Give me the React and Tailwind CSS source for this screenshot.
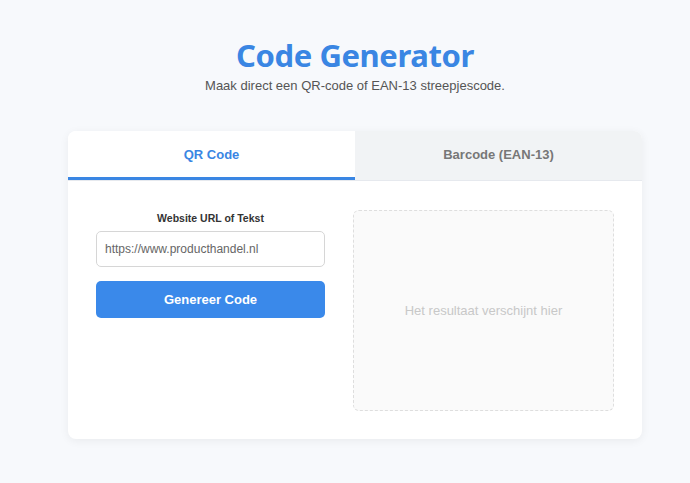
import React, { useState } from "react";

const App = () => {
  const [tab, setTab] = useState("qr");

  return (
    <div className="min-h-[483px] bg-[#f7f9fc] pl-5 font-['Liberation_Sans',Arial,sans-serif]">
      <div className="flex flex-col items-center">
        {/* Header */}
        <h1 className="mt-[33px] font-['Noto_Sans',sans-serif] text-[31px] font-bold leading-[44px] tracking-[-0.4px] text-[#3a86e3]">
          Code Generator
        </h1>
        <p className="mt-[1px] text-[13px] leading-[16px] text-[#555]">
          Maak direct een QR-code of EAN-13 streepjescode.
        </p>

        {/* Card */}
        <div className="mt-[37px] w-[574px] overflow-hidden rounded-lg bg-white shadow-[0_2px_10px_rgba(0,0,0,0.06)]">
          <div className="flex border-b border-[#e6e9ee]">
            <button
              onClick={() => setTab("qr")}
              className={
                tab === "qr"
                  ? "h-[49px] flex-1 border-b-[3px] border-[#3a86e3] bg-white pt-[2px] text-[13px] font-bold text-[#3a86e3]"
                  : "h-[49px] flex-1 border-b-[3px] border-transparent bg-[#f1f3f5] pt-[2px] text-[13px] font-bold text-[#777]"
              }
            >
              QR Code
            </button>
            <button
              onClick={() => setTab("ean")}
              className={
                tab === "ean"
                  ? "h-[49px] flex-1 border-b-[3px] border-[#3a86e3] bg-white pt-[2px] text-[13px] font-bold text-[#3a86e3]"
                  : "h-[49px] flex-1 border-b-[3px] border-transparent bg-[#f1f3f5] pt-[2px] text-[13px] font-bold text-[#777]"
              }
            >
              Barcode (EAN-13)
            </button>
          </div>

          <div className="flex gap-[28px] px-[28px] pt-[29px] pb-[28px]">
            {/* Form */}
            <div className="w-[229px] pt-[2px]">
              <label className="block text-center text-[10.5px] font-bold leading-[12px] text-[#333]">
                Website URL of Tekst
              </label>
              <input
                className="mt-[7px] h-[36px] w-full rounded-[5px] border border-[#d6d6d6] px-[8px] text-[12px] text-[#666] outline-none"
                defaultValue={tab === "qr" ? "https://www.producthandel.nl" : ""}
              />
              <button className="mt-[14px] h-[37px] w-full rounded-[5px] bg-[#3a89ea] text-[13px] font-bold text-white">
                Genereer Code
              </button>
            </div>

            {/* Result */}
            <div className="flex h-[201px] w-[261px] items-center justify-center rounded-[6px] border border-dashed border-[#dedede] bg-[#fafafa]">
              <span className="text-[13px] text-[#c8c8c8]">Het resultaat verschijnt hier</span>
            </div>
          </div>
        </div>
      </div>
    </div>
  );
};

export default App;
